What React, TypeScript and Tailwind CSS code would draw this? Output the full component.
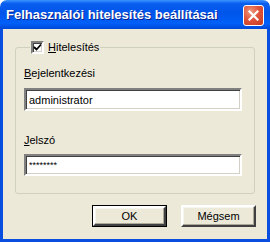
import { useState } from 'react'

const SUNKEN = 'border-2 border-t-[#808080] border-l-[#808080] border-b-white border-r-white shadow-[inset_1px_1px_0_#404040,inset_-1px_-1px_0_#d4d0c8]'
const RAISED = 'border-2 border-t-white border-l-white border-b-[#404040] border-r-[#404040] shadow-[inset_-1px_-1px_0_#aca899,inset_1px_1px_0_#f5f4ee]'

export default function App() {
  const [enabled, setEnabled] = useState(true)
  const [user, setUser] = useState('administrator')
  const [pass, setPass] = useState('********')

  return (
    <div className="w-[270px] h-[242px] flex flex-col bg-white text-[11px] text-black font-['Liberation_Sans',Arial,sans-serif]">
      {/* title bar */}
      <div className="h-[29px] shrink-0 flex items-center justify-between pl-[6px] pr-[6px] rounded-t-[7px] bg-[linear-gradient(to_bottom,#3d95ff_0%,#0a5ff0_12%,#0055ea_45%,#0060f8_80%,#0048d8_100%)]">
        <span className="text-white font-bold text-[13px] [text-shadow:1px_1px_0_#0a1f8c]">
          Felhasználói hitelesítés beállításai
        </span>
        <button className="w-[21px] h-[21px] mt-[1px] rounded-[3px] border border-white flex items-center justify-center bg-[radial-gradient(circle_at_35%_30%,#f09a7f_0%,#e0553b_45%,#c43a1e_100%)]">
          <svg width="11" height="11" viewBox="0 0 11 11">
            <path d="M1.5 1.5 L9.5 9.5 M9.5 1.5 L1.5 9.5" stroke="white" strokeWidth="2.2" strokeLinecap="square" />
          </svg>
        </button>
      </div>

      {/* body */}
      <div className="flex-1 flex flex-col bg-[#ece9d8] border-x-[3px] border-b-[3px] border-[#0a4ee0]">
        <fieldset className="ml-[12px] mt-[12px] w-[240px] h-[153px] border border-[#d0d0bf] rounded-[3px] px-[8px]">
          <legend className="ml-[6px] px-[1px] flex items-center gap-[4px] h-[13px]">
            <button
              onClick={() => setEnabled(!enabled)}
              className={`w-[13px] h-[13px] bg-white flex items-center justify-center ${SUNKEN}`}
            >
              {enabled && (
                <svg width="9" height="9" viewBox="0 0 9 9" className="shrink-0">
                  <path d="M1 4 L3.5 6.5 L8 1.5" stroke="black" strokeWidth="1.8" fill="none" />
                </svg>
              )}
            </button>
            <span><span className="underline">H</span>itelesítés</span>
          </legend>

          <div className="mt-[13px] leading-[13px]"><span className="underline">B</span>ejelentkezési</div>
          <input
            value={user}
            onChange={(e) => setUser(e.target.value)}
            className={`mt-[8px] w-[218px] h-[23px] px-[3px] bg-white outline-none text-[11px] ${SUNKEN}`}
          />

          <div className="mt-[23px] leading-[13px]"><span className="underline">J</span>elszó</div>
          <input
            type="text"
            value={pass}
            onChange={(e) => setPass(e.target.value)}
            className={`mt-[7px] w-[218px] h-[22px] px-[3px] bg-white outline-none text-[9px] ${SUNKEN}`}
          />
        </fieldset>

        <div className="flex justify-end gap-[14px] mt-[11px] mr-[11px]">
          <button className="w-[75px] h-[22px] border border-black bg-[#ece9d8]">
            <div className={`w-full h-full flex items-center justify-center ${RAISED}`}>OK</div>
          </button>
          <button className={`w-[75px] h-[22px] bg-[#ece9d8] ${RAISED}`}>Mégsem</button>
        </div>
      </div>
    </div>
  )
}
